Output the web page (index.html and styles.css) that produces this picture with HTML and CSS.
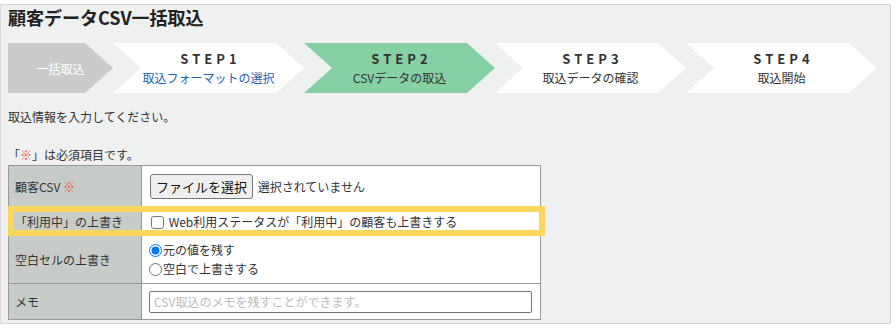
FILE: index.html
```html
<!DOCTYPE html>
<html lang="ja">

<head>
  <meta charset="UTF-8" />
  <title>顧客データCSV一括取込</title>
  <link rel="stylesheet" href="styles.css">
</head>

<body>
  <div class="panel">
    <h1>顧客データCSV一括取込</h1>

    <div class="steps">
      <div class="step step-top">一括取込</div>
      <div class="step">
        <span class="step-no">STEP1</span>
        <a class="step-name link" href="#">取込フォーマットの選択</a>
      </div>
      <div class="step current">
        <span class="step-no">STEP2</span>
        <span class="step-name">CSVデータの取込</span>
      </div>
      <div class="step">
        <span class="step-no">STEP3</span>
        <span class="step-name">取込データの確認</span>
      </div>
      <div class="step">
        <span class="step-no">STEP4</span>
        <span class="step-name">取込開始</span>
      </div>
    </div>

    <p class="lead">取込情報を入力してください。</p>
    <p class="note">「<span class="req">※</span>」は必須項目です。</p>

    <div class="form-wrap">
      <table class="form-table">
        <tr class="row-file">
          <th>顧客CSV <span class="req">※</span></th>
          <td>
            <button class="file-btn" type="button">ファイルを選択</button>
            <span class="file-name">選択されていません</span>
          </td>
        </tr>
        <tr class="row-status">
          <th>「利用中」の上書き</th>
          <td>
            <label class="check"><input type="checkbox"> Web利用ステータスが「利用中」の顧客も上書きする</label>
          </td>
        </tr>
        <tr class="row-blank">
          <th>空白セルの上書き</th>
          <td>
            <label class="radio"><input type="radio" name="blank" checked>元の値を残す</label>
            <label class="radio"><input type="radio" name="blank">空白で上書きする</label>
          </td>
        </tr>
        <tr class="row-memo">
          <th>メモ</th>
          <td><input class="memo" type="text" placeholder="CSV取込のメモを残すことができます。"></td>
        </tr>
      </table>
      <div class="highlight"></div>
    </div>
  </div>
</body>

</html>
```

FILE: styles.css
```css
body {
  margin: 0;
  font-family: "Noto Sans CJK JP", "Noto Sans", sans-serif;
  font-size: 12px;
  color: #333;
  background: #fff;
}

.panel {
  box-sizing: border-box;
  width: 891px;
  height: 320px;
  margin-top: 4px;
  padding: 0 7px;
  background: #eff1f0;
  border: 1px solid #d6d7d6;
}

h1 {
  margin: 0;
  font-size: 18px;
  line-height: 24px;
  font-weight: bold;
  color: #222;
}

.steps {
  display: flex;
  margin-top: 14px;
  height: 50px;
}

.step {
  width: 191px;
  height: 50px;
  display: flex;
  flex-direction: column;
  align-items: center;
  justify-content: center;
  background: #fff;
  clip-path: polygon(0 0, calc(100% - 28px) 0, 100% 50%, calc(100% - 28px) 100%, 0 100%, 28px 50%);
}

.step-top {
  width: 105px;
  background: #c9ccc9;
  color: #fff;
  font-size: 12px;
  clip-path: polygon(0 0, calc(100% - 28px) 0, 100% 50%, calc(100% - 28px) 100%, 0 100%);
}

.step.current {
  background: #86d0a4;
}

.step-no {
  font-size: 13px;
  font-weight: bold;
  letter-spacing: 4px;
  margin-right: -4px;
  line-height: 18px;
  color: #333;
}

.step-name {
  line-height: 18px;
  font-size: 12px;
  color: #333;
  margin-top: 1px;
}

.link {
  color: #1d63b0;
  text-decoration: none;
}

.lead {
  margin: 15px 0 0;
  line-height: 18px;
}

.note {
  margin: 20px 0 0;
  line-height: 18px;
}

.req {
  color: #ec4b3f;
}

.form-wrap {
  position: relative;
  margin-top: 1px;
  width: 537px;
}

.form-table {
  width: 533px;
  border-collapse: collapse;
  border: 1px solid #999;
}

.form-table th,
.form-table td {
  border: 1px solid #999;
  padding: 0 8px;
  text-align: left;
  font-weight: normal;
  vertical-align: middle;
}

.form-table th {
  width: 118px;
  padding-left: 6px;
  background: #c8ccc8;
}

.form-table td {
  background: #fff;
}

.row-file {
  height: 41px;
}

.row-status {
  height: 29px;
}

.row-blank {
  height: 48px;
}

.row-blank td {
  padding-bottom: 2px;
}

.row-memo {
  height: 36px;
}

.file-btn {
  font-family: inherit;
  font-size: 13px;
  height: 25px;
  padding: 0 5px;
  background: #efefef;
  border: 1px solid #767676;
  border-radius: 3px;
  color: #111;
  vertical-align: middle;
}

.file-name {
  margin-left: 2px;
  vertical-align: middle;
}

.check input {
  margin: 0 2px 0 1px;
  vertical-align: -2px;
}

.radio {
  display: block;
  line-height: 19px;
}

.radio input {
  margin: 0 1px 0 -1px;
  vertical-align: -2px;
}

.memo {
  box-sizing: border-box;
  width: 383px;
  height: 22px;
  margin-left: -1px;
  padding: 0 4px;
  font-family: inherit;
  font-size: 12px;
  border: 1px solid #767676;
  border-radius: 2px;
}

.memo::placeholder {
  color: #bbb;
}

.highlight {
  position: absolute;
  left: 0;
  top: 41px;
  width: 537px;
  height: 30px;
  box-sizing: border-box;
  border: 6px solid #f9d65c;
  pointer-events: none;
}
```
